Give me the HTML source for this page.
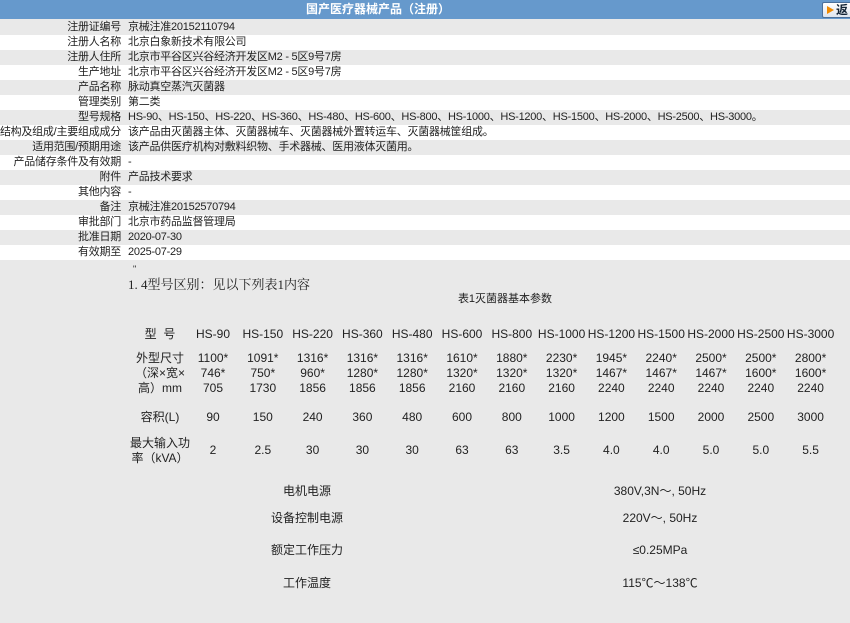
<!DOCTYPE html>
<html><head><meta charset="utf-8"><style>
body{margin:0;width:850px;height:623px;background:#e9e9e9;font-family:"Liberation Sans","Noto Sans CJK SC",sans-serif;font-size:12px;color:#222;position:relative;overflow:hidden}
.hd{position:absolute;left:0;top:0;width:850px;height:19px;background:#6699cc;color:#fff;font-weight:bold;text-align:center;line-height:19px;font-size:12px}
.hd span{position:absolute;left:0;width:756px;text-align:center}
.btn{position:absolute;left:822px;top:2px;width:40px;height:14px;background:linear-gradient(#fff,#dde4ee);border:1px solid #4a6f9a;border-radius:2px;color:#123;font-weight:bold;text-align:left;line-height:14px}
.btn i{display:inline-block;width:0;height:0;border-left:7px solid #f08a00;border-top:4px solid transparent;border-bottom:4px solid transparent;margin:3px 2px 0 4px;vertical-align:top}
.r{position:absolute;left:0;width:850px;height:15px;line-height:15px;background:#fff;font-size:11px;letter-spacing:-0.25px}
.r.g{background:#e9e9e9}
.r b{font-weight:normal;position:absolute;right:729px;white-space:nowrap}
.r em{font-style:normal;position:absolute;left:128px;white-space:nowrap}
.t{position:absolute;white-space:nowrap;text-align:center;line-height:15px}
</style></head><body>
<div class="hd"><span>国产医疗器械产品（注册）</span><div class="btn"><i></i>返</div></div>
<div class="r g" style="top:20px"><b>注册证编号</b><em>京械注准20152110794</em></div>
<div class="r" style="top:35px"><b>注册人名称</b><em>北京白象新技术有限公司</em></div>
<div class="r g" style="top:50px"><b>注册人住所</b><em>北京市平谷区兴谷经济开发区M2 - 5区9号7房</em></div>
<div class="r" style="top:65px"><b>生产地址</b><em>北京市平谷区兴谷经济开发区M2 - 5区9号7房</em></div>
<div class="r g" style="top:80px"><b>产品名称</b><em>脉动真空蒸汽灭菌器</em></div>
<div class="r" style="top:95px"><b>管理类别</b><em>第二类</em></div>
<div class="r g" style="top:110px"><b>型号规格</b><em>HS-90、HS-150、HS-220、HS-360、HS-480、HS-600、HS-800、HS-1000、HS-1200、HS-1500、HS-2000、HS-2500、HS-3000。</em></div>
<div class="r" style="top:125px"><b>结构及组成/主要组成成分</b><em>该产品由灭菌器主体、灭菌器械车、灭菌器械外置转运车、灭菌器械筐组成。</em></div>
<div class="r g" style="top:140px"><b>适用范围/预期用途</b><em>该产品供医疗机构对敷料织物、手术器械、医用液体灭菌用。</em></div>
<div class="r" style="top:155px"><b>产品储存条件及有效期</b><em>-</em></div>
<div class="r g" style="top:170px"><b>附件</b><em>产品技术要求</em></div>
<div class="r" style="top:185px"><b>其他内容</b><em>-</em></div>
<div class="r g" style="top:200px"><b>备注</b><em>京械注准20152570794</em></div>
<div class="r" style="top:215px"><b>审批部门</b><em>北京市药品监督管理局</em></div>
<div class="r g" style="top:230px"><b>批准日期</b><em>2020-07-30</em></div>
<div class="r" style="top:245px"><b>有效期至</b><em>2025-07-29</em></div>
<div class="t" style="left:133px;top:262px;font-size:9px">"</div>
<div class="t" style="left:128px;top:277px;font-size:13px;font-family:'Liberation Serif','Noto Serif CJK SC',serif">1. 4型号区别：见以下列表1内容</div>
<div class="t" style="left:440px;top:292px;font-size:11px;width:130px">表1灭菌器基本参数</div>
<div id="tb"></div>
<script>
var cols=["HS-90","HS-150","HS-220","HS-360","HS-480","HS-600","HS-800","HS-1000","HS-1200","HS-1500","HS-2000","HS-2500","HS-3000"];
var a=["1100*","1091*","1316*","1316*","1316*","1610*","1880*","2230*","1945*","2240*","2500*","2500*","2800*"];
var b=["746*","750*","960*","1280*","1280*","1320*","1320*","1320*","1467*","1467*","1467*","1600*","1600*"];
var c=["705","1730","1856","1856","1856","2160","2160","2160","2240","2240","2240","2240","2240"];
var v=["90","150","240","360","480","600","800","1000","1200","1500","2000","2500","3000"];
var p=["2","2.5","30","30","30","63","63","3.5","4.0","4.0","5.0","5.0","5.5"];
var h="";
function put(x,y,t,w){h+='<div class="t" style="left:'+(x-w/2)+'px;top:'+y+'px;width:'+w+'px">'+t+'</div>';}
put(160,327,"型&nbsp;&nbsp;号",80);put(160,351,"外型尺寸",80);put(160,366,"（深×宽×",80);put(160,381,"高）mm",80);
put(160,410,"容积(L)",80);put(160,436,"最大输入功",80);put(160,451,"率（kVA）",80);
for(var i=0;i<13;i++){var x=213+i*49.8;put(x,327,cols[i],50);put(x,351,a[i],50);put(x,366,b[i],50);put(x,381,c[i],50);put(x,410,v[i],50);put(x,443,p[i],50);}
var L=["电机电源","设备控制电源","额定工作压力","工作温度"],R=["380V,3N～, 50Hz","220V～, 50Hz","≤0.25MPa","115℃～138℃"],Y=[484,511,543,576];
for(var j=0;j<4;j++){put(307,Y[j],L[j],100);put(660,Y[j],R[j],140);}
document.getElementById("tb").innerHTML=h;
</script>
</body></html>
